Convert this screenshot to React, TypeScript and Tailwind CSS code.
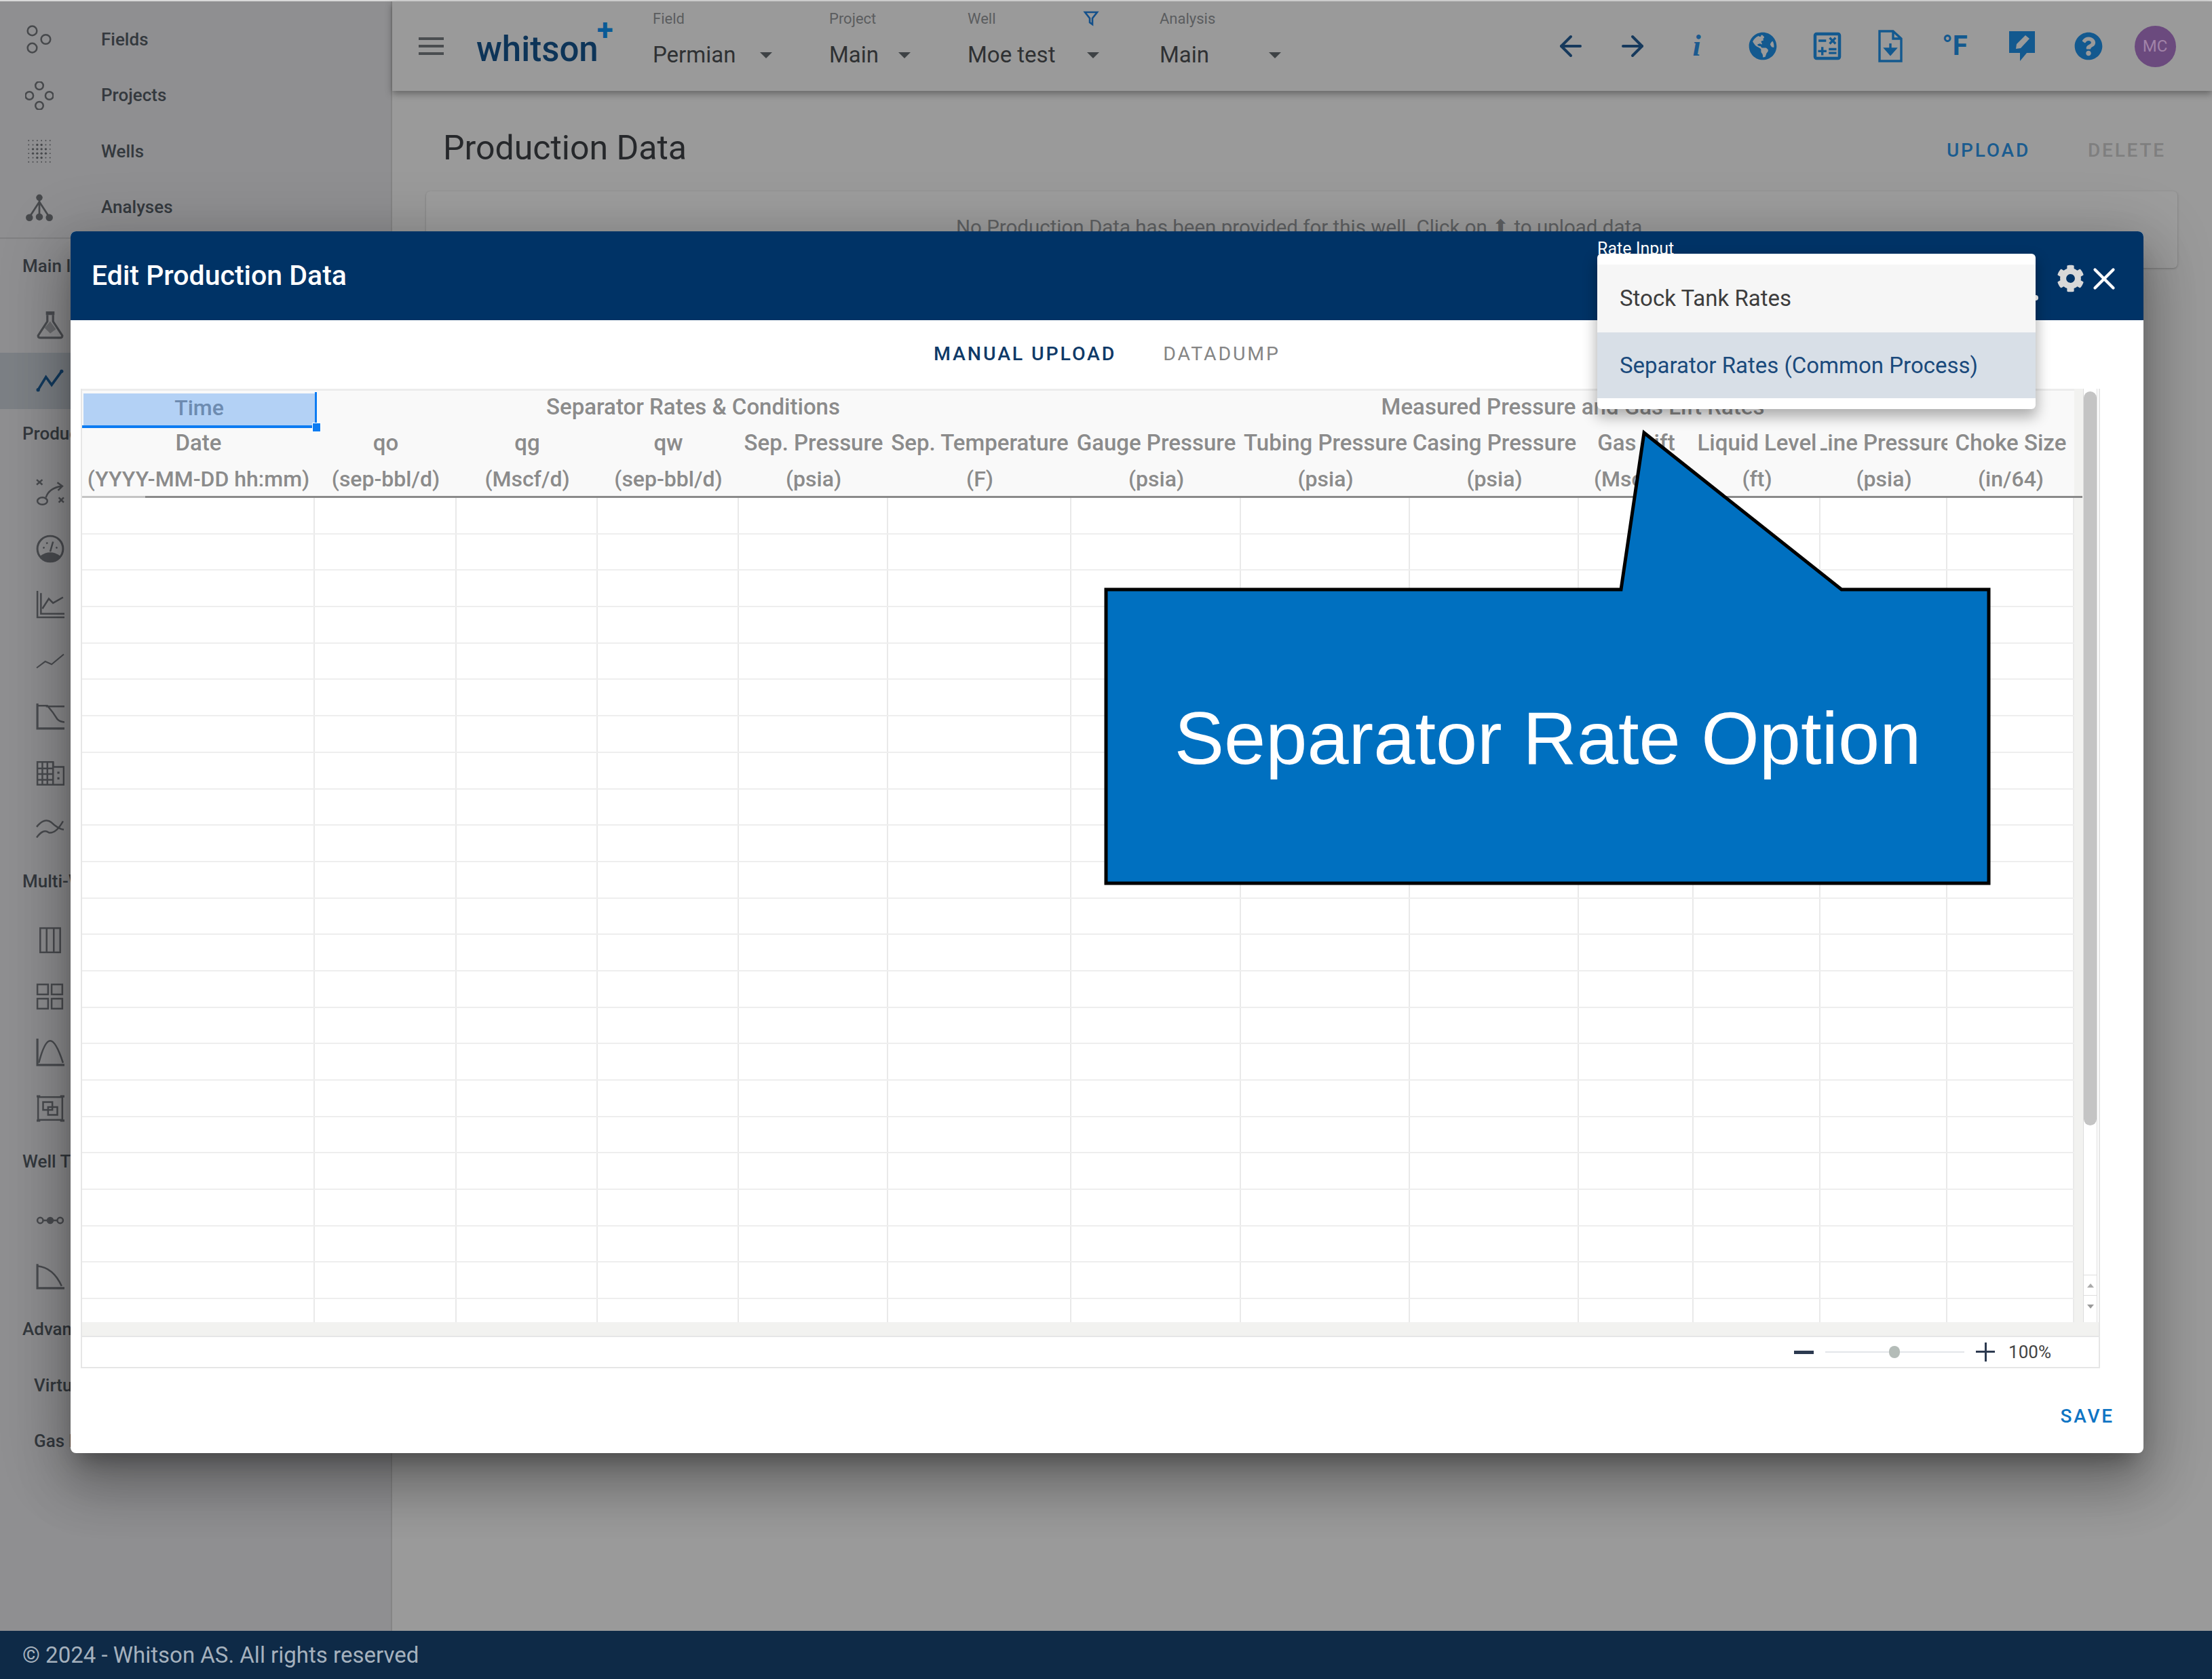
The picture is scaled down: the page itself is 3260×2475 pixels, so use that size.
import React from "react";
import { ArrowLeft, ArrowRight, X } from "lucide-react";
import { FaCog, FaGlobeAmericas, FaQuestionCircle } from "react-icons/fa";
import { MdOutlineCalculate } from "react-icons/md";

function Svg({ children }: { children: React.ReactNode }) {
  return (
    <svg viewBox="0 0 40 40" fill="none" stroke="currentColor" strokeWidth="2.4" className="h-[42px] w-[42px]">
      {children}
    </svg>
  );
}

const FieldsIcon = () => (
  <Svg>
    <circle cx="10" cy="8" r="6.5" />
    <circle cx="29" cy="20" r="6.5" />
    <circle cx="10" cy="32" r="6.5" />
  </Svg>
);
const ProjectsIcon = () => (
  <Svg>
    <circle cx="20" cy="6" r="5.5" />
    <circle cx="6" cy="20" r="5.5" />
    <circle cx="34" cy="20" r="5.5" />
    <circle cx="20" cy="34" r="5.5" />
  </Svg>
);
const WellsIcon = () => (
  <Svg>
    {[4, 10, 16, 22, 28, 34].map((x) =>
      [4, 10, 16, 22, 28, 34].map((y) => (
        <circle
          key={`${x}-${y}`}
          cx={x + 1}
          cy={y + 1}
          r={Math.abs(x - 19) + Math.abs(y - 19) < 16 ? 1.6 : 0.9}
          fill="currentColor"
          stroke="none"
        />
      ))
    )}
  </Svg>
);
const AnalysesIcon = () => (
  <Svg>
    <path d="M20 7 L20 30 M20 12 L7 32 M20 12 L33 32" strokeWidth="2.6" />
    <circle cx="20" cy="6" r="4.5" fill="currentColor" stroke="none" />
    <circle cx="6" cy="34" r="5" fill="currentColor" stroke="none" />
    <circle cx="20" cy="33" r="5" fill="currentColor" stroke="none" />
    <circle cx="34" cy="34" r="5" fill="currentColor" stroke="none" />
  </Svg>
);
const FlaskIcon = () => (
  <Svg>
    <rect x="14" y="1" width="12" height="5" fill="currentColor" stroke="none" />
    <path d="M16 6 V15 L3 35 Q3 38 6 38 H34 Q37 38 37 35 L24 15 V6" strokeWidth="3" />
    <path d="M12 24 L20 15 L28 26 L20 32 Z" fill="currentColor" stroke="none" opacity="0.55" />
  </Svg>
);
const TrendActive = () => (
  <Svg>
    <path d="M3 33 L14 15 L22 26 L36 7" strokeWidth="3.5" />
    <circle cx="3" cy="33" r="2.5" fill="currentColor" stroke="none" />
    <circle cx="36" cy="7" r="2.5" fill="currentColor" stroke="none" />
  </Svg>
);
const SeparatorIcon = () => (
  <Svg>
    <path d="M1 2 L9 9 M9 2 L1 9 M32 27 L39 34 M39 27 L32 34" />
    <ellipse cx="9" cy="32" rx="7" ry="5" />
    <path d="M14 27 Q18 14 36 11 M30 6 L37 11 L31 17" />
  </Svg>
);
const GaugeIcon = () => (
  <Svg>
    <circle cx="20" cy="20" r="18" strokeWidth="2.8" />
    <path d="M6 30 Q20 20 34 30 Q28 38 20 38 Q12 38 6 30 Z" fill="currentColor" stroke="none" />
    <path d="M20 24 L24 10 M10 18 L12 19 M30 18 L28 19 M15 11 L16 13" />
  </Svg>
);
const ChartAreaIcon = () => (
  <Svg>
    <path d="M2 1 V38 H40 M7 4 V33 H40" />
    <path d="M9 26 L18 12 L24 18 L38 10" />
  </Svg>
);
const TrendIcon = () => (
  <Svg>
    <path d="M1 30 L13 21 L22 25 L39 11" strokeWidth="2" />
  </Svg>
);
const DeclineIcon = () => (
  <Svg>
    <path d="M2 2 V37 H40" strokeWidth="3" />
    <path d="M2 5 H16 Q24 14 30 24 Q34 28 40 28" />
    <path d="M14 6 H40" />
  </Svg>
);
const TableIcon = () => (
  <Svg>
    <path d="M2 5 H24 V12 H39 V37 H2 Z" />
    <path d="M2 14 H24 M2 22 H24 M2 30 H24 M9 5 V37 M16 5 V37 M24 5 V37" />
    <path d="M30 20 H33 M30 28 H33" strokeWidth="3" />
  </Svg>
);
const CrossIcon = () => (
  <Svg>
    <path d="M1 18 Q12 4 22 12 Q30 20 39 22 M1 33 Q10 20 18 26 Q28 28 38 10" />
  </Svg>
);
const ColumnsIcon = () => (
  <Svg>
    <rect x="6" y="3" width="28" height="34" />
    <path d="M15 3 V37 M25 3 V37" />
  </Svg>
);
const GridIcon = () => (
  <Svg>
    <rect x="2" y="3" width="15" height="14" />
    <rect x="22" y="3" width="15" height="14" />
    <rect x="2" y="23" width="15" height="14" />
    <rect x="22" y="23" width="15" height="14" />
  </Svg>
);
const BellIcon = () => (
  <Svg>
    <path d="M2 1 V38 H40" strokeWidth="3" />
    <path d="M4 35 Q12 4 20 4 Q28 4 38 35" />
  </Svg>
);
const BoxesIcon = () => (
  <Svg>
    <rect x="3" y="4" width="34" height="32" />
    <rect x="10" y="11" width="13" height="11" />
    <rect x="17" y="18" width="13" height="11" />
    <path d="M1 3 H6 M34 3 H40 M1 37 H6 M34 37 H40" strokeWidth="3" />
  </Svg>
);
const ChainIcon = () => (
  <Svg>
    <circle cx="6" cy="20" r="4" />
    <circle cx="20" cy="20" r="5" fill="currentColor" stroke="none" />
    <circle cx="34" cy="20" r="4" />
    <path d="M10 20 H30" />
  </Svg>
);
const QuarterIcon = () => (
  <Svg>
    <path d="M2 3 V37 H40" strokeWidth="3" />
    <path d="M2 6 Q24 8 36 34" />
  </Svg>
);

const navTop = [
  { label: "Fields", icon: <FieldsIcon /> },
  { label: "Projects", icon: <ProjectsIcon /> },
  { label: "Wells", icon: <WellsIcon /> },
  { label: "Analyses", icon: <AnalysesIcon /> },
];

const navRail = [
  { label: "Main Inputs" },
  { icon: <FlaskIcon /> },
  { icon: <TrendActive />, active: true },
  { label: "Production" },
  { icon: <SeparatorIcon /> },
  { icon: <GaugeIcon /> },
  { icon: <ChartAreaIcon /> },
  { icon: <TrendIcon /> },
  { icon: <DeclineIcon /> },
  { icon: <TableIcon /> },
  { icon: <CrossIcon /> },
  { label: "Multi-Well" },
  { icon: <ColumnsIcon /> },
  { icon: <GridIcon /> },
  { icon: <BellIcon /> },
  { icon: <BoxesIcon /> },
  { label: "Well Testing" },
  { icon: <ChainIcon /> },
  { icon: <QuarterIcon /> },
  { label: "Advanced" },
  { label: "Virtual Meter", indent: true },
  { label: "Gas Lift", indent: true },
];

function Caret() {
  return <span className="h-0 w-0 border-x-[9px] border-t-[9px] border-x-transparent border-t-[#3e4245]" />;
}

function Selector({
  label,
  value,
  outer,
  inner,
  funnel,
}: {
  label: string;
  value: string;
  outer: string;
  inner: string;
  funnel?: boolean;
}) {
  return (
    <div className={`mt-[11px] flex flex-col self-start ${outer}`}>
      <div className={`flex h-[28px] items-center justify-between text-[22px] text-[#5b5d5f] ${inner}`}>
        <span>{label}</span>
        {funnel && (
          <svg viewBox="0 0 24 24" fill="none" stroke="#14508a" strokeWidth="2.6" className="h-[28px] w-[24px]">
            <path d="M3 3 H21 L14 12 V21 L10 18 V12 Z" />
          </svg>
        )}
      </div>
      <div className={`mt-[20px] flex h-[40px] items-center justify-between text-[33px] text-[#2f3133] ${inner}`}>
        <span>{value}</span>
        <Caret />
      </div>
    </div>
  );
}

const groupHeaders = [
  { text: "Time", cls: "" },
  { text: "Separator Rates & Conditions", cls: "col-span-5 pb-[8px] text-[33px]" },
  { text: "Measured Pressure and Gas Lift Rates", cls: "col-span-7 pb-[8px] text-[33px]" },
];

const columns = [
  ["Date", "(YYYY-MM-DD hh:mm)"],
  ["qo", "(sep-bbl/d)"],
  ["qg", "(Mscf/d)"],
  ["qw", "(sep-bbl/d)"],
  ["Sep. Pressure", "(psia)"],
  ["Sep. Temperature", "(F)"],
  ["Gauge Pressure", "(psia)"],
  ["Tubing Pressure", "(psia)"],
  ["Casing Pressure", "(psia)"],
  ["Gas Lift", "(Mscf/d)"],
  ["Liquid Level", "(ft)"],
  ["Line Pressure", "(psia)"],
  ["Choke Size", "(in/64)"],
];

const gridCols =
  "grid grid-cols-[343px_209px_208px_208px_220px_270px_250px_249px_249px_169px_187px_187px_187px]";

function HeaderCell({ text, className = "" }: { text: string; className?: string }) {
  return (
    <div className={`flex items-center justify-center overflow-hidden whitespace-nowrap ${className}`}>{text}</div>
  );
}

function Spreadsheet() {
  return (
    <div className="mx-[15px] flex w-[2976px] flex-col border-x-2 border-[#e6e6e6]">
      <div className="flex">
        <div className="w-[2936px]">
          {/* frozen header rows */}
          <div className="relative border-t-[3px] border-b-[3px] border-t-[#ececec] border-b-[#8a8a8a] bg-[#f9f9f9] text-[32px] font-medium text-[#8b8b8b]">
            <div className={`${gridCols} h-[55px]`}>
              {groupHeaders.map((g) =>
                g.text === "Time" ? (
                  <div key={g.text} className="relative flex items-start">
                    <div className="mt-[4px] ml-[2px] flex h-[47px] w-[341px] items-center justify-center bg-[#b3d1f5] pb-[6px] text-[#6d8bb0]">
                      Time
                    </div>
                    <div className="absolute top-[2px] -right-[3px] h-[52px] w-[3px] bg-[#0d7cf2]" />
                    <div className="absolute bottom-0 left-0 h-[4px] w-full bg-[#0d7cf2]" />
                    <div className="absolute -right-[9px] -bottom-[6px] h-[14px] w-[13px] border border-white bg-[#0d7cf2]" />
                  </div>
                ) : (
                  <HeaderCell key={g.text} text={g.text} className={g.cls} />
                )
              )}
            </div>
            <div className={`${gridCols} h-[50px] text-[33px]`}>
              {columns.map((c) => (
                <HeaderCell key={c[0]} text={c[0]} className="pb-[6px]" />
              ))}
            </div>
            <div className={`${gridCols} h-[50px]`}>
              {columns.map((c, i) => (
                <HeaderCell key={i} text={c[1]} />
              ))}
            </div>
            <span className="absolute -bottom-[3px] left-0 h-[3px] w-[93px] bg-[#c4c4c4]" />
            <span className="absolute right-[-12px] -bottom-[3px] h-[3px] w-[12px] bg-[#8a8a8a]" />
          </div>
          {/* empty rows */}
          <div className="h-[1215px] overflow-hidden bg-white">
            {Array.from({ length: 23 }).map((_, r) => (
              <div key={r} className={`${gridCols} h-[53.7px] border-b-2 border-[#eeeeee]`}>
                {columns.map((_, c) => (
                  <div key={c} className="border-r-2 border-[#e9e9e9]" />
                ))}
              </div>
            ))}
          </div>
        </div>
        {/* scrollbar */}
        <div className="flex w-[36px] border-l-[13px] border-[#f2f2f0]">
          <div className="flex w-[21px] flex-col border-x border-[#dddddd] bg-white">
            <div className="mt-[4px] h-[1082px] rounded-full bg-[#c4c4c4]" />
            <div className="mt-auto flex h-[31px] items-center justify-center border-y border-[#dddddd]">
              <span className="h-0 w-0 border-x-[5px] border-b-[6px] border-x-transparent border-b-[#aaaaaa]" />
            </div>
            <div className="mb-[8px] flex h-[31px] items-center justify-center">
              <span className="h-0 w-0 border-x-[5px] border-t-[6px] border-x-transparent border-t-[#999999]" />
            </div>
          </div>
        </div>
      </div>
      <div className="h-[22px] border-b-2 border-[#e6e6e6] bg-[#f2f2f0]" />
      <div className="flex h-[46px] items-center justify-end border-b-2 border-[#e6e6e6] bg-white pr-[70px]">
        <span className="h-[5px] w-[29px] bg-[#2c3a50]" />
        <div className="relative mx-[17px] h-[2px] w-[205px] bg-[#e3e5ea]">
          <span className="absolute top-[-8px] left-[94px] h-[18px] w-[16px] rounded-full bg-[#b4bcb8]" />
        </div>
        <div className="relative h-[28px] w-[28px]">
          <span className="absolute top-[12px] left-0 h-[3px] w-[28px] bg-[#2c3a50]" />
          <span className="absolute top-0 left-[13px] h-[28px] w-[3px] bg-[#2c3a50]" />
        </div>
        <span className="ml-[20px] text-[26px] text-[#444444]">100%</span>
      </div>
    </div>
  );
}

function EditDialog() {
  return (
    <div className="absolute top-[341px] left-[104px] flex h-[1801px] w-[3055px] flex-col rounded-[8px] bg-white shadow-[0_22px_30px_-14px_rgba(0,0,0,0.3),0_48px_76px_6px_rgba(0,0,0,0.2),0_18px_92px_16px_rgba(0,0,0,0.18)]">
      <div className="flex h-[131px] items-center justify-between rounded-t-[8px] bg-[#003366] pr-[31px] pl-[31px] text-white">
        <h2 className="text-[41px] leading-none font-medium">Edit Production Data</h2>
        <div className="mt-[8px] flex items-center gap-[2px]">
          <FaCog className="h-[41px] w-[41px] text-[#d8d8d8]" />
          <X className="h-[54px] w-[54px]" strokeWidth={1.9} />
        </div>
      </div>
      <div className="flex h-[101px] items-center justify-center gap-[69px] text-[28.5px] font-medium tracking-[0.1em]">
        <span className="text-[#0f3a68]">MANUAL UPLOAD</span>
        <span className="font-normal text-[#858585]">DATADUMP</span>
      </div>
      <Spreadsheet />
      <div className="flex flex-1 items-center justify-end pt-[16px] pr-[43px] text-[28px] font-medium tracking-[0.1em] text-[#0f75c4]">
        SAVE
      </div>

      {/* open rate select over the dialog */}
      <span className="absolute top-[11px] left-[2250px] text-[25px] leading-[30px] text-white">Rate Input</span>
      <span className="absolute top-[94px] left-[2892px] h-[8px] w-[8px] rounded-full bg-white" />
      <div className="absolute top-[33px] left-[2250px] w-[646px] rounded-[6px] bg-white py-[16px] text-[33px] shadow-[0_10px_20px_2px_rgba(0,0,0,0.3)]">
        <div className="flex h-[100px] items-center bg-[#f6f6f6] pl-[33px] text-[#3d3d3d]">Stock Tank Rates</div>
        <div className="flex h-[97px] items-center bg-[#d8dfe7] pl-[33px] text-[#1a4a7c]">
          Separator Rates (Common Process)
        </div>
      </div>
    </div>
  );
}

function Callout() {
  return (
    <div className="absolute top-[633px] left-[1626px] h-[672px] w-[1310px]">
      <svg viewBox="0 0 1310 672" className="absolute inset-0 h-full w-full">
        <path
          d="M4 236 H763 L797 5 L1088 236 H1305 V669 H4 Z"
          fill="#0070c0"
          stroke="#000000"
          strokeWidth="5"
          strokeLinejoin="miter"
        />
      </svg>
      <div className="absolute inset-x-0 top-[236px] bottom-0 flex items-center justify-center font-['Liberation_Sans',sans-serif] text-[110px] text-white">
        Separator Rate Option
      </div>
    </div>
  );
}

function IconSlot({ className, children }: { className: string; children: React.ReactNode }) {
  return <div className={`flex items-center justify-center ${className}`}>{children}</div>;
}

export default function App() {
  return (
    <div className="relative flex h-[2475px] w-[3260px] flex-col overflow-hidden bg-[#9a9a9a] font-['Roboto',sans-serif]">
      <div className="h-[2px] bg-[#d8d8d8]" />
      <div className="flex min-h-0 flex-1">
        <aside className="w-[578px] shrink-0 border-r-2 border-[#858585] bg-[#8f8f91] text-[#34393e]">
          <div className="border-b-2 border-[#808082] pt-[15px] pb-[3px]">
            {navTop.map((n) => (
              <div key={n.label} className="flex h-[82.5px] items-center pl-[37px]">
                <span className="text-[#47494c]">{n.icon}</span>
                <span className="ml-[70px] text-[26px] font-medium">{n.label}</span>
              </div>
            ))}
          </div>
          <div className="pt-[3px]">
            {navRail.map((n, i) =>
              n.icon ? (
                <div
                  key={i}
                  className={`flex h-[82.5px] items-center pl-[53px] ${
                    n.active ? "bg-[#7c8085] text-[#123a5e]" : "text-[#4a4c50]"
                  }`}
                >
                  {n.icon}
                </div>
              ) : (
                <div
                  key={i}
                  className={`flex h-[82.5px] w-[104px] items-center overflow-hidden pb-[8px] text-[26px] font-medium whitespace-nowrap ${
                    n.indent ? "pl-[50px]" : "pl-[33px]"
                  }`}
                >
                  {n.label}
                </div>
              )
            )}
          </div>
        </aside>

        <main className="flex min-w-0 flex-1 flex-col">
          <header className="flex h-[132px] items-center bg-[#9a9a9a] pl-[39px] shadow-[0_4px_10px_rgba(0,0,0,0.35)]">
            <div className="flex w-[37px] flex-col gap-[7px]">
              <span className="h-[4px] bg-[#4a4d50]" />
              <span className="h-[4px] bg-[#4a4d50]" />
              <span className="h-[4px] bg-[#4a4d50]" />
            </div>
            <div className="ml-[48px] flex w-[260px] items-start">
              <span className="mt-[8px] text-[51px] leading-none font-medium text-[#0d3458]">whitson</span>
              <span className="-mt-[17px] -ml-[2px] text-[44px] leading-none font-bold text-[#0a5a96]">+</span>
            </div>
            <Selector label="Field" value="Permian" outer="w-[260px]" inner="w-[176px]" />
            <Selector label="Project" value="Main" outer="w-[204px]" inner="w-[120px]" />
            <Selector label="Well" value="Moe test" outer="w-[283px]" inner="w-[194px]" funnel />
            <Selector label="Analysis" value="Main" outer="w-[200px]" inner="w-[179px]" />

            <div className="ml-auto flex items-center pr-[35px]">
              <IconSlot className="w-[90px]">
                <ArrowLeft className="h-[48px] w-[48px] text-[#16395c]" strokeWidth={2} />
              </IconSlot>
              <IconSlot className="w-[92px]">
                <ArrowRight className="h-[48px] w-[48px] text-[#16395c]" strokeWidth={2} />
              </IconSlot>
              <IconSlot className="w-[97px]">
                <span className="font-['Liberation_Serif',serif] text-[44px] leading-none font-bold text-[#1b5a8f] italic">
                  i
                </span>
              </IconSlot>
              <IconSlot className="w-[98px]">
                <FaGlobeAmericas className="h-[42px] w-[42px] text-[#13598f]" />
              </IconSlot>
              <IconSlot className="w-[92px]">
                <MdOutlineCalculate className="h-[54px] w-[54px] text-[#13598f]" />
              </IconSlot>
              <IconSlot className="w-[93px]">
                <svg viewBox="0 0 36 48" fill="none" stroke="#13598f" strokeWidth="3.4" className="h-[48px] w-[36px]">
                  <path d="M2 2 H22 L34 13 V46 H2 Z" />
                  <path d="M22 2 V13 H34" />
                  <path d="M18 20 V34" />
                  <path d="M11 28 L18 36 L25 28 Z" fill="#13598f" />
                </svg>
              </IconSlot>
              <IconSlot className="w-[98px]">
                <span className="text-[40px] leading-none font-bold text-[#13598f]">°F</span>
              </IconSlot>
              <IconSlot className="w-[99px]">
                <svg viewBox="0 0 42 48" className="h-[48px] w-[42px]">
                  <path d="M2 2 H40 V34 H28 L18 46 V34 H2 Z" fill="#13598f" />
                  <path d="M12 28 L13 21 L26 8 L32 13 L19 27 Z" fill="#9a9a9a" />
                </svg>
              </IconSlot>
              <IconSlot className="w-[98px]">
                <FaQuestionCircle className="h-[42px] w-[42px] text-[#13598f]" />
              </IconSlot>
              <IconSlot className="w-[98px]">
                <div className="flex h-[61px] w-[61px] items-center justify-center rounded-full bg-[#6b4a7e] text-[24px] text-[#a183a8]">
                  MC
                </div>
              </IconSlot>
            </div>
          </header>

          <div className="flex h-[148px] items-center justify-between pt-[20px] pr-[68px] pl-[75px]">
            <h1 className="text-[50px] leading-none text-[#26282b]">Production Data</h1>
            <div className="flex gap-[85px] pt-[8px] text-[28px] font-medium tracking-[0.1em]">
              <span className="text-[#1b5c8f]">UPLOAD</span>
              <span className="text-[#7f7f7f]">DELETE</span>
            </div>
          </div>
          <div className="mr-[51px] ml-[50px] flex h-[113px] items-center justify-center rounded-[6px] bg-[#9d9d9d] pb-[6px] text-[29.5px] text-[#5f6163] shadow-[0_1px_3px_rgba(0,0,0,0.25)]">
            No Production Data has been provided for this well. Click on ⬆ to upload data.
          </div>
        </main>
      </div>
      <footer className="flex h-[71px] shrink-0 items-center bg-[#0e2a47] pl-[33px] text-[33px] text-[#a5b1bd]">
        © 2024 - Whitson AS. All rights reserved
      </footer>

      <EditDialog />
      <Callout />
    </div>
  );
}
